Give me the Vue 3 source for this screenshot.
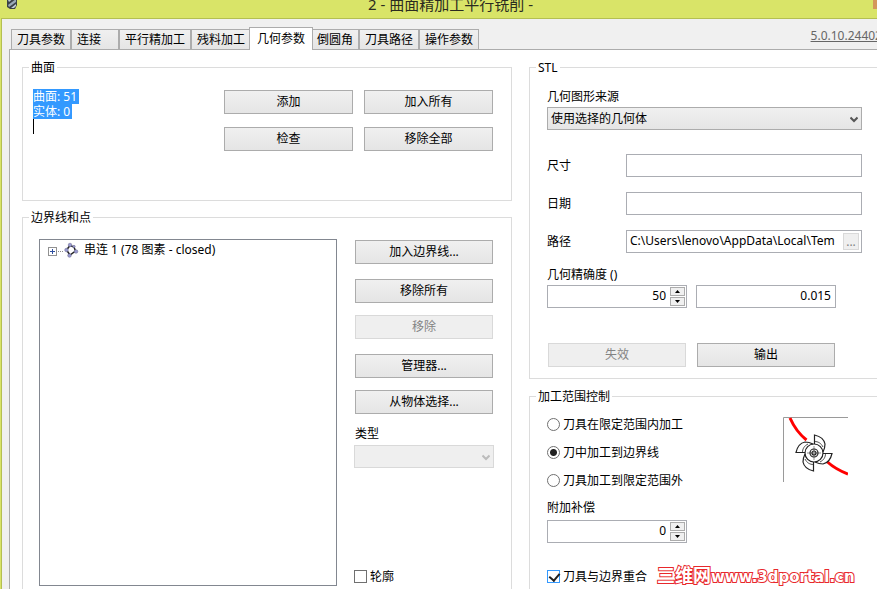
<script setup>
import { ref } from 'vue'

const tabs = ['刀具参数', '连接', '平行精加工', '残料加工', '几何参数', '倒圆角', '刀具路径', '操作参数']
const activeTab = ref('几何参数')

const source = ref('使用选择的几何体')
const size = ref('')
const date = ref('')
const path = ref('C:\\Users\\lenovo\\AppData\\Local\\Tem')
const accuracy = ref('50')
const tolerance = ref('0.015')

const ranges = ['刀具在限定范围内加工', '刀中加工到边界线', '刀具加工到限定范围外']
const range = ref('刀中加工到边界线')
const offset = ref('0')
const coincide = ref(true)
const contour = ref(false)

function step(value, delta) {
  return String(Number(value) + delta)
}
</script>

<template>
  <div class="window">
    <header class="titlebar">
      <svg class="app-icon" width="12" height="14" viewBox="0 0 12 14" aria-hidden="true">
        <path d="M2 0 H11 V9 L9 13 H4 L1 11 V3 Z" fill="#3a4148" />
        <path d="M2 4 L8 0 H10 L3 6 Z" fill="#b9c6d2" />
        <path d="M2 9 L10 3 V6 L3 11 Z" fill="#9aa9b8" />
        <path d="M5 12 L10 8 V10 L8 12 Z" fill="#c3ced8" />
      </svg>
      <h1 class="title">2 - 曲面精加工平行铣削 -</h1>
      <button class="close" type="button" aria-label="关闭"></button>
    </header>

    <div class="body">
      <nav class="tabbar">
        <button
          v-for="t in tabs"
          :key="t"
          type="button"
          class="tab"
          :class="{ active: t === activeTab }"
          @click="activeTab = t"
        >{{ t }}</button>
        <a class="version" href="#">5.0.10.24402</a>
      </nav>

      <main class="page">
        <div class="column left">
          <fieldset class="group surfaces">
            <legend>曲面</legend>
            <div class="summary">
              <span class="marked">曲面: 51</span>
              <span class="marked">实体: 0</span>
              <span class="caret"></span>
            </div>
            <div class="surface-buttons">
              <button type="button" class="btn">添加</button>
              <button type="button" class="btn">加入所有</button>
              <button type="button" class="btn">检查</button>
              <button type="button" class="btn">移除全部</button>
            </div>
          </fieldset>

          <fieldset class="group boundary open">
            <legend>边界线和点</legend>
            <ul class="tree">
              <li class="node">
                <svg width="32" height="16" viewBox="0 0 32 16" aria-hidden="true">
                  <rect x="0.5" y="5.5" width="8" height="8" fill="#fff" stroke="#919191" />
                  <path d="M2 9.5 H7 M4.500 7 V12" stroke="#2f4f9f" />
                  <path d="M10 9.500 H16" stroke="#8a8a8a" stroke-dasharray="1 1" />
                  <path d="M18.500 8 L22 3.500 L26 5 L27.500 9 L22 13 Z" fill="none" stroke="#222" stroke-width="1.500" />
                  <g fill="#9a9ad0" stroke="#66668c" stroke-width="0.500">
                    <circle cx="22" cy="3" r="1.800" />
                    <circle cx="26" cy="4.500" r="1.200" />
                    <circle cx="18.500" cy="8" r="1.800" />
                    <circle cx="28" cy="9.500" r="1.800" />
                    <circle cx="21.500" cy="13.500" r="1.800" />
                  </g>
                </svg>
                <span>串连 1 (78 图素 - closed)</span>
              </li>
            </ul>
            <div class="side">
              <button type="button" class="btn">加入边界线...</button>
              <div class="pair">
                <button type="button" class="btn">移除所有</button>
                <button type="button" class="btn" disabled>移除</button>
              </div>
              <div class="pair">
                <button type="button" class="btn">管理器...</button>
                <button type="button" class="btn">从物体选择...</button>
              </div>
              <div class="type">
                <label for="type">类型</label>
                <div class="select disabled">
                  <select id="type" disabled></select>
                  <svg class="chevron" width="8" height="7" viewBox="0 0 8 7" aria-hidden="true">
                    <path d="M0.500 1.500 L4 5 L7.500 1.500" fill="none" stroke="currentColor" stroke-width="2" />
                  </svg>
                </div>
              </div>
              <label class="check contour">
                <input v-model="contour" type="checkbox" />轮廓
              </label>
            </div>
          </fieldset>
        </div>

        <div class="column right">
          <fieldset class="group stl">
            <legend>STL</legend>
            <label for="source">几何图形来源</label>
            <div class="select">
              <select id="source" v-model="source">
                <option>使用选择的几何体</option>
              </select>
              <svg class="chevron" width="8" height="7" viewBox="0 0 8 7" aria-hidden="true">
                <path d="M0.500 1.500 L4 5 L7.500 1.500" fill="none" stroke="currentColor" stroke-width="2" />
              </svg>
            </div>
            <div class="rows">
              <label for="size">尺寸</label>
              <div class="field"><input id="size" v-model="size" type="text" /></div>
              <label for="date">日期</label>
              <div class="field"><input id="date" v-model="date" type="text" /></div>
              <label for="path">路径</label>
              <div class="field">
                <input id="path" v-model="path" type="text" />
                <button type="button" class="browse" aria-label="浏览">...</button>
              </div>
            </div>
            <label for="accuracy">几何精确度 ()</label>
            <div class="numbers">
              <div class="field number">
                <input id="accuracy" v-model="accuracy" type="text" />
                <div class="spin">
                  <button type="button" aria-label="增加" @click="accuracy = step(accuracy, 1)">
                    <svg width="5" height="3" viewBox="0 0 5 3"><path d="M0 3 L2.500 0 L5 3 Z" /></svg>
                  </button>
                  <button type="button" aria-label="减少" @click="accuracy = step(accuracy, -1)">
                    <svg width="5" height="3" viewBox="0 0 5 3"><path d="M0 0 L2.500 3 L5 0 Z" /></svg>
                  </button>
                </div>
              </div>
              <div class="field number">
                <input v-model="tolerance" type="text" aria-label="公差" />
              </div>
            </div>
            <div class="numbers actions">
              <button type="button" class="btn" disabled>失效</button>
              <button type="button" class="btn">输出</button>
            </div>
          </fieldset>

          <fieldset class="group range open">
            <legend>加工范围控制</legend>
            <div class="range-top">
              <div class="radios">
                <label v-for="r in ranges" :key="r" class="check">
                  <input v-model="range" type="radio" name="range" :value="r" />{{ r }}
                </label>
                <label for="offset">附加补偿</label>
              </div>
              <svg class="cutter" width="65" height="65" viewBox="0 0 65 65" aria-hidden="true">
                <path d="M0.500 65 V0.500 H65" fill="none" stroke="#9a9a9a" />
                <path d="M7 1 C11 10 16 17 23.500 23 M44.500 45 C50 50 57 54 65 57" fill="none" stroke="#f00" stroke-width="3" />
                <g fill="none" stroke="#222" stroke-width="1.200">
                  <g v-for="a in [0, 90, 180, 270]" :key="a" :transform="`rotate(${a} 31 36)`">
                    <path d="M31.500 27 V18 C36 19 41 22 42 27 C42 30 41 33 40 35" />
                    <path d="M31.500 24.500 C35 24.500 38 26 40 30" stroke-width="0.800" />
                  </g>
                  <circle cx="31" cy="36" r="9" />
                  <circle cx="31" cy="36" r="4" />
                  <circle cx="31" cy="36" r="2" />
                  <path d="M31 29 V43 M24 36 H38" stroke-width="0.500" />
                </g>
              </svg>
            </div>
            <div class="field number offset">
              <input id="offset" v-model="offset" type="text" />
              <div class="spin">
                <button type="button" aria-label="增加" @click="offset = step(offset, 1)">
                  <svg width="5" height="3" viewBox="0 0 5 3"><path d="M0 3 L2.500 0 L5 3 Z" /></svg>
                </button>
                <button type="button" aria-label="减少" @click="offset = step(offset, -1)">
                  <svg width="5" height="3" viewBox="0 0 5 3"><path d="M0 0 L2.500 3 L5 0 Z" /></svg>
                </button>
              </div>
            </div>
            <div class="last-row">
              <label class="check focused">
                <input v-model="coincide" type="checkbox" />刀具与边界重合
              </label>
              <span class="mark"><span class="mark-cn">三维网</span>www.3dportal.cn</span>
            </div>
          </fieldset>
        </div>
      </main>
    </div>
  </div>
</template>

<style>
body {
  margin: 0;
}
</style>

<style scoped>
.window,
.window * {
  box-sizing: border-box;
}

.window {
  display: flex;
  flex-direction: column;
  min-height: 100vh;
  overflow: hidden;
  background: #d9e468;
  color: #000;
  font: 12px/16px "Noto Sans", "Noto Sans CJK SC", sans-serif;
}

button,
input,
select {
  margin: 0;
  padding: 0;
  color: inherit;
  font: inherit;
}

.titlebar {
  display: flex;
  align-items: flex-start;
  height: 18px;
  padding-left: 6px;
  overflow: hidden;
}

.app-icon {
  margin-top: -4px;
}

.title {
  flex: 1;
  margin: -6px 0 0;
  padding-left: 10px;
  color: #2b2b20;
  font-size: 15px;
  font-weight: 400;
  line-height: 20px;
  text-align: center;
}

.close {
  width: 4px;
  height: 9px;
  border: 0;
  background: #d4985c;
}

.body {
  display: flex;
  flex: 1;
  flex-direction: column;
  margin-left: 1px;
  padding-left: 7px;
  border-top: 1px solid #b4bf52;
  border-left: 1px solid #b4bf52;
  background: #f0f0f0;
}

.tabbar {
  display: flex;
  align-items: flex-end;
  height: 31px;
  margin-bottom: -1px;
  padding-left: 2px;
}

.tab {
  flex: none;
  min-width: 48px;
  height: 21px;
  padding: 0 5px;
  border: 1px solid #acacac;
  background: linear-gradient(#f0f0f0, #e5e5e5);
  line-height: 19px;
  text-align: left;
  white-space: nowrap;
}

.tab.active {
  z-index: 1;
  height: 23px;
  margin: 0 -2px;
  padding: 0 7px 2px;
  border-bottom: 0;
  background: #fff;
}

.version {
  margin: 0 -7px 6px auto;
  padding-right: 2px;
  color: #666;
}

.page {
  display: flex;
  flex: 1;
  gap: 17px;
  padding: 8px 0 0 12px;
  border: solid #acacac;
  border-width: 1px 0 0 1px;
  background: #fff;
}

.column {
  display: flex;
  flex-direction: column;
  min-width: 0;
}

.left {
  flex: 490 1 0;
  gap: 7px;
}

.right {
  flex: 348 1 0;
  gap: 8px;
}

.group {
  min-width: 0;
  margin: 0;
  border: 1px solid #dcdcdc;
}

.group.open {
  flex: 1;
  border-bottom: 0;
}

.right .group {
  padding: 0 15px 0 17px;
  border-right: 0;
}

legend {
  padding: 2px 2px 0;
}

.right legend {
  margin-left: -11px;
}

.boundary legend {
  margin-left: -10px;
}

.surfaces legend {
  margin-left: -4px;
}

.surfaces {
  display: flex;
  justify-content: space-between;
  padding: 13px 18px 49px 10px;
}

.summary {
  display: flex;
  flex-direction: column;
  align-items: flex-start;
}

.marked {
  padding-right: 2px;
  background: #3399ff;
  color: #fff;
  line-height: 15px;
}

.caret {
  width: 1px;
  height: 15px;
  background: #000;
}

.surface-buttons {
  display: grid;
  grid-template-columns: 129px 129px;
  gap: 13px 11px;
  padding-top: 1px;
}

.btn {
  height: 24px;
  border: 1px solid #acacac;
  background: linear-gradient(#f0f0f0, #e5e5e5);
  line-height: 22px;
  text-align: center;
}

.btn:disabled {
  border-color: #d9d9d9;
  background: #efefef;
  color: #838383;
}

.boundary {
  display: grid;
  grid-template-columns: 1fr 140px;
  gap: 17px;
  padding: 13px 17px 3px 16px;
}

.tree {
  margin: 0;
  padding: 2px 8px;
  border: 1px solid #828790;
  list-style: none;
}

.node {
  display: flex;
  gap: 4px;
}

.side {
  display: flex;
  flex-direction: column;
  gap: 15px;
  padding-top: 1px;
}

.side .btn {
  margin: 0 1px;
}

.pair {
  display: flex;
  flex-direction: column;
  gap: 12px;
}

.type {
  display: flex;
  flex-direction: column;
  gap: 3px;
  margin-top: -3px;
}

.type label {
  padding-left: 1px;
}

.contour {
  margin: auto 0 2px;
}

.select {
  position: relative;
  height: 23px;
}

.select select {
  display: block;
  width: 100%;
  height: 23px;
  padding: 0 20px 0 3px;
  border: 1px solid #acacac;
  border-radius: 0;
  background: linear-gradient(#f0f0f0, #e5e5e5);
  appearance: none;
}

.select.disabled select {
  border-color: #d9d9d9;
  background: #efefef;
  opacity: 1;
}

.chevron {
  position: absolute;
  top: 9px;
  right: 4px;
  color: #555;
  pointer-events: none;
}

.disabled .chevron {
  color: #bcbcbc;
}

.stl > label {
  display: block;
  margin-bottom: 2px;
}

.right .stl {
  padding-top: 13px;
  padding-bottom: 11px;
}

.rows {
  display: grid;
  grid-template-columns: 79px 1fr;
  row-gap: 15px;
  align-items: center;
  margin: 24px 0 14px;
}

.field {
  display: flex;
  min-width: 0;
  height: 23px;
  padding: 2px;
  border: 1px solid #abadb3;
  background: #fff;
}

.field input {
  flex: 1;
  width: 0;
  min-width: 0;
  padding: 0 1px 2px;
  border: 0;
  background: none;
  outline: 0;
}

.browse {
  width: 16px;
  margin-left: 2px;
  border: 1px solid #d9d9d9;
  background: #efefef;
  color: #838383;
  line-height: 14px;
}

.numbers {
  display: flex;
  gap: 9px;
}

.number {
  width: 140px;
}

.number input {
  padding: 0 2px 2px;
  text-align: right;
}

.spin {
  display: flex;
  flex-direction: column;
  gap: 1px;
  width: 15px;
  margin: -1px -1px -1px 2px;
}

.spin button {
  display: flex;
  flex: 1;
  align-items: center;
  justify-content: center;
  border: 1px solid #acacac;
  background: #f0f0f0;
}

.actions {
  gap: 11px;
  margin-top: 35px;
  padding-left: 1px;
}

.actions .btn {
  width: 138px;
}

.right .range {
  padding-top: 11px;
}

.range-top {
  display: flex;
  justify-content: space-between;
  padding-right: 14px;
}

.radios {
  display: flex;
  flex-direction: column;
  gap: 12px;
}

.cutter {
  flex: none;
  margin-top: 1px;
}

.offset {
  margin: 4px 0 25px;
}

.check {
  display: flex;
  gap: 3px;
  align-items: flex-start;
  height: 16px;
  line-height: 18px;
  white-space: nowrap;
}

.check input {
  position: relative;
  flex: none;
  width: 13px;
  height: 13px;
  margin-top: 2px;
  border: 1px solid #707070;
  background: #fff;
  appearance: none;
}

.check input[type="radio"] {
  border-radius: 50%;
}

.check input[type="radio"]:checked {
  background: radial-gradient(circle, #212121 3px, #fff 4px);
}

.check.focused input {
  border-color: #3399ff;
}

.check input[type="checkbox"]:checked::after {
  position: absolute;
  top: 0;
  left: 3px;
  width: 5px;
  height: 8px;
  border: solid #212121;
  border-width: 0 2px 2px 0;
  content: "";
  transform: rotate(40deg);
}

.last-row {
  display: flex;
  gap: 10px;
  align-items: center;
  height: 16px;
}

.mark {
  color: #fff;
  font-family: "DejaVu Sans", "Noto Sans CJK SC", sans-serif;
  font-size: 15px;
  font-weight: 700;
  paint-order: stroke fill;
  white-space: nowrap;
  -webkit-text-stroke: 2px #e8282c;
}

.mark-cn {
  font-size: 18px;
}
</style>
